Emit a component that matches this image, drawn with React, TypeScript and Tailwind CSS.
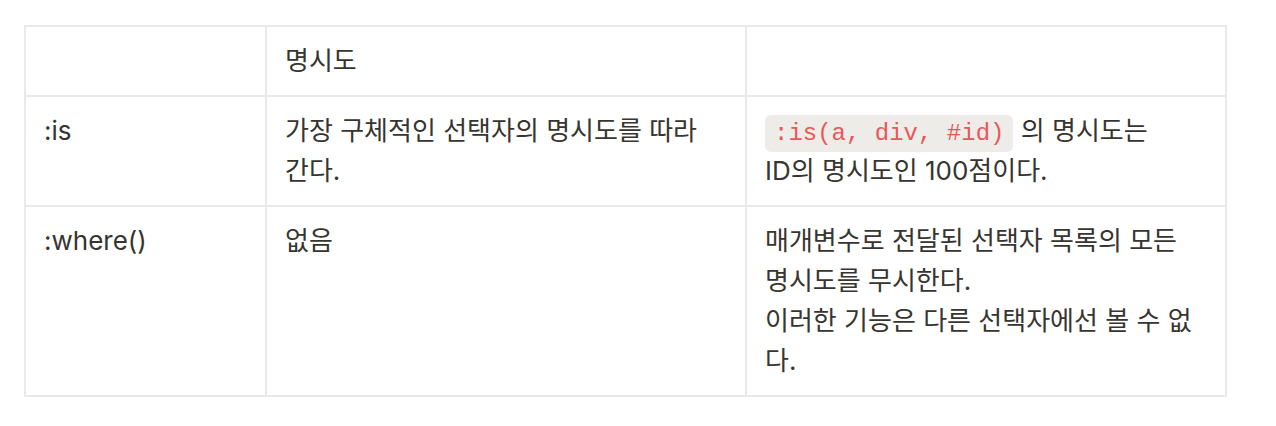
export default function App() {
  const cell =
    "border-2 border-[#e9e9e7] px-[18px] py-[14px] align-top text-left font-normal";

  return (
    <div className="min-h-screen bg-white pt-[25px] pl-[24px] font-['Inter','Noto_Sans_CJK_KR',sans-serif] text-[26px] leading-[40px] text-[#37352f]">
      <table className="w-[1201px] table-fixed border-collapse">
        <colgroup>
          <col className="w-[241px]" />
          <col className="w-[480px]" />
          <col className="w-[480px]" />
        </colgroup>
        <tbody>
          <tr>
            <td className={cell}></td>
            <td className={cell}>명시도</td>
            <td className={cell}></td>
          </tr>
          <tr>
            <td className={cell}>:is</td>
            <td className={cell}>
              가장 구체적인 선택자의 명시도를 따라
              <br />
              간다.
            </td>
            <td className={cell}>
              <code className="rounded-[6px] bg-[#edece9] px-[9px] py-[5px] font-['Liberation_Mono',monospace] text-[24px] leading-[24px] text-[#eb5757]">
                :is(a, div, #id)
              </code>{" "}
              의 명시도는
              <br />
              ID의 명시도인 100점이다.
            </td>
          </tr>
          <tr>
            <td className={cell}>:where()</td>
            <td className={cell}>없음</td>
            <td className={cell}>
              매개변수로 전달된 선택자 목록의 모든
              <br />
              명시도를 무시한다.
              <br />
              이러한 기능은 다른 선택자에선 볼 수 없
              <br />
              다.
            </td>
          </tr>
        </tbody>
      </table>
    </div>
  );
}
